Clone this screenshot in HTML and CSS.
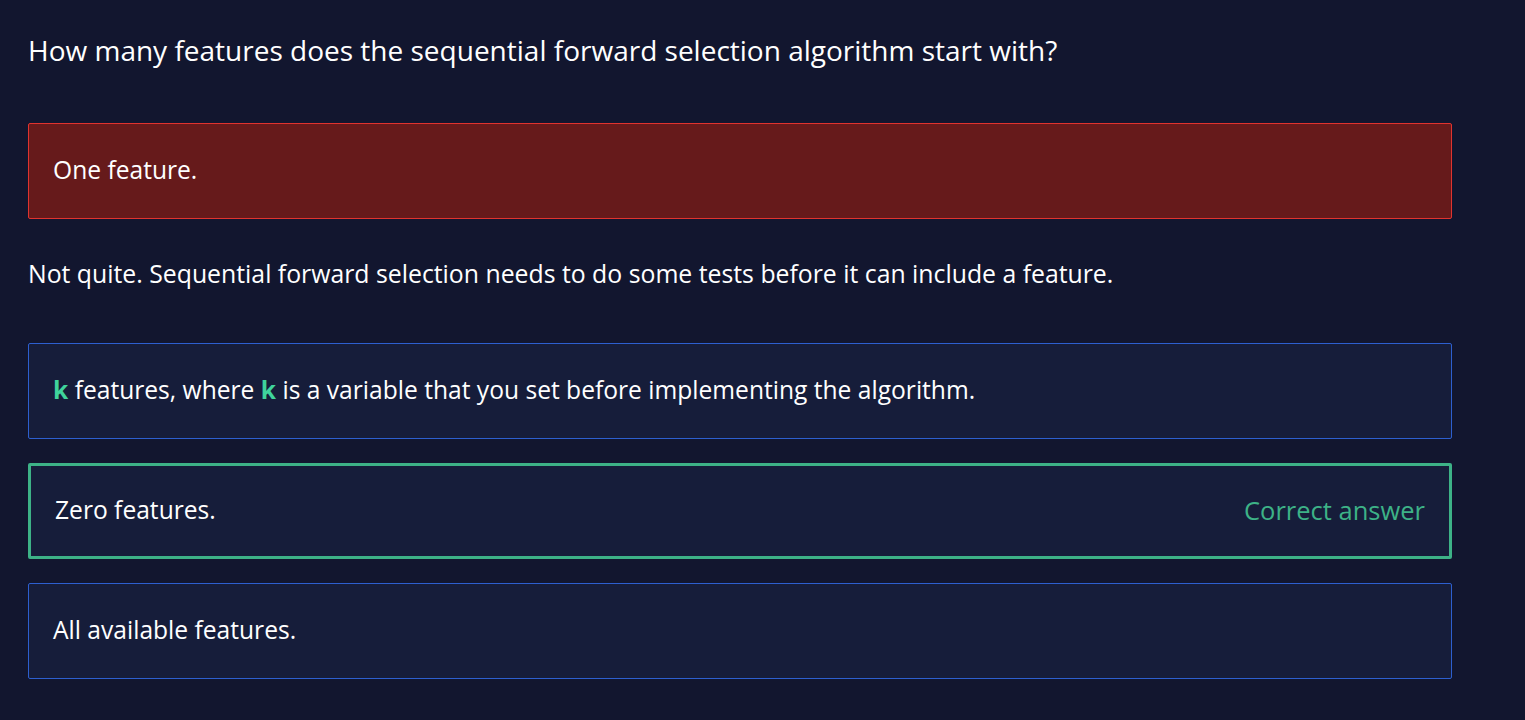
FILE: index.html
```html
<!DOCTYPE html>
<html>
<head>
<meta charset="utf-8">
<link rel="stylesheet" href="styles.css">
</head>
<body>
<main class="quiz">
  <h1 class="question">How many features does the sequential forward selection algorithm start with?</h1>
  <div class="option option-wrong">One feature.</div>
  <p class="feedback">Not quite. Sequential forward selection needs to do some tests before it can include a feature.</p>
  <div class="options">
    <div class="option"><span><b class="var">k</b> features, where <b class="var">k</b> is a variable that you set before implementing the algorithm.</span></div>
    <div class="option option-correct"><span>Zero features.</span><span class="correct-label">Correct answer</span></div>
    <div class="option"><span>All available features.</span></div>
  </div>
</main>
</body>
</html>
```
FILE: styles.css
```css
html, body {
  margin: 0;
  padding: 0;
  background: #12162f;
}
body {
  font-family: "Open Sans", Lato, sans-serif;
  color: #ffffff;
}
.quiz {
  width: 1424px;
  padding: 28px 28px 0 28px;
}
.question {
  margin: 0;
  font-size: 28px;
  font-weight: 400;
  line-height: 44px;
  height: 44px;
}
.option {
  box-sizing: border-box;
  height: 96px;
  display: flex;
  align-items: center;
  justify-content: space-between;
  padding: 0 24px 3px 24px;
  border: 1px solid #2d5fcf;
  border-radius: 2px;
  background: #161d3a;
  font-size: 24.6px;
  line-height: 32px;
}
.option-wrong {
  margin-top: 51px;
  background: #661a1b;
  border-color: #e0332f;
}
.option-correct {
  border: 3px solid #3db287;
}
.correct-label {
  color: #3db287;
  font-size: 25.5px;
}
.var {
  color: #3fd49c;
  font-weight: 700;
}
.feedback {
  margin: 0;
  padding: 38px 0 54px 0;
  font-size: 24.8px;
  line-height: 32px;
}
.options {
  display: flex;
  flex-direction: column;
  gap: 24px;
}
```
